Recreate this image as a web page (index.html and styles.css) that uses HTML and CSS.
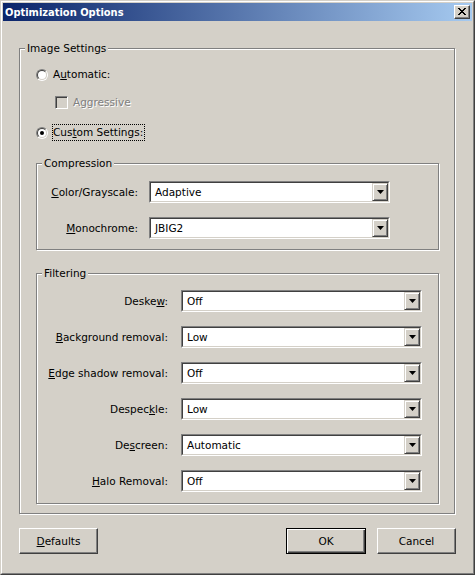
FILE: index.html
```html
<!DOCTYPE html>
<html>
<head>
<meta charset="utf-8">
<title>Optimization Options</title>
<link rel="stylesheet" href="styles.css">
</head>
<body>
<div class="window">
  <div class="frame">
    <div class="titlebar">
      <span class="title">Optimization Options</span>
      <span class="close" aria-label="Close">
        <svg width="8" height="7" viewBox="0 0 8 7" shape-rendering="crispEdges"><path fill="#000" d="M0 0h2v1H0zM6 0h2v1H6zM1 1h2v1H1zM5 1h2v1H5zM2 2h4v1H2zM3 3h2v1H3zM2 4h4v1H2zM1 5h2v1H1zM5 5h2v1H5zM0 6h2v1H0zM6 6h2v1H6z"/></svg>
      </span>
    </div>
    <div class="client">
      <fieldset class="group outer">
        <legend>Image Settings</legend>
        <div class="opt row-auto">
          <span class="radio"></span>
          <span class="opt-label">A<u>u</u>tomatic:</span>
        </div>
        <div class="opt row-aggr">
          <span class="check disabled"></span>
          <span class="opt-label disabled-text">Aggressive</span>
        </div>
        <div class="opt row-custom">
          <span class="radio checked"></span>
          <span class="opt-label focus">Cus<u>t</u>om Settings:</span>
        </div>

        <fieldset class="group inner comp">
          <legend>Compression</legend>
          <div class="form comp-form">
            <span class="lbl"><u>C</u>olor/Grayscale:</span>
            <div class="combo"><div class="combo-in"><span class="val">Adaptive</span><span class="drop"><svg width="7" height="4" viewBox="0 0 7 4"><path d="M0 0h7L3.5 4z" fill="#000"/></svg></span></div></div>
            <span class="lbl"><u>M</u>onochrome:</span>
            <div class="combo"><div class="combo-in"><span class="val">JBIG2</span><span class="drop"><svg width="7" height="4" viewBox="0 0 7 4"><path d="M0 0h7L3.5 4z" fill="#000"/></svg></span></div></div>
          </div>
        </fieldset>

        <fieldset class="group inner filt">
          <legend>Filtering</legend>
          <div class="form filt-form">
            <span class="lbl">Deske<u>w</u>:</span>
            <div class="combo"><div class="combo-in"><span class="val">Off</span><span class="drop"><svg width="7" height="4" viewBox="0 0 7 4"><path d="M0 0h7L3.5 4z" fill="#000"/></svg></span></div></div>
            <span class="lbl"><u>B</u>ackground removal:</span>
            <div class="combo"><div class="combo-in"><span class="val">Low</span><span class="drop"><svg width="7" height="4" viewBox="0 0 7 4"><path d="M0 0h7L3.5 4z" fill="#000"/></svg></span></div></div>
            <span class="lbl"><u>E</u>dge shadow removal:</span>
            <div class="combo"><div class="combo-in"><span class="val">Off</span><span class="drop"><svg width="7" height="4" viewBox="0 0 7 4"><path d="M0 0h7L3.5 4z" fill="#000"/></svg></span></div></div>
            <span class="lbl">Despec<u>k</u>le:</span>
            <div class="combo"><div class="combo-in"><span class="val">Low</span><span class="drop"><svg width="7" height="4" viewBox="0 0 7 4"><path d="M0 0h7L3.5 4z" fill="#000"/></svg></span></div></div>
            <span class="lbl">De<u>s</u>creen:</span>
            <div class="combo"><div class="combo-in"><span class="val">Automatic</span><span class="drop"><svg width="7" height="4" viewBox="0 0 7 4"><path d="M0 0h7L3.5 4z" fill="#000"/></svg></span></div></div>
            <span class="lbl"><u>H</u>alo Removal:</span>
            <div class="combo"><div class="combo-in"><span class="val">Off</span><span class="drop"><svg width="7" height="4" viewBox="0 0 7 4"><path d="M0 0h7L3.5 4z" fill="#000"/></svg></span></div></div>
          </div>
        </fieldset>
      </fieldset>

      <div class="buttons">
        <button class="btn"><u>D</u>efaults</button>
        <div class="btn-group">
          <button class="btn default">OK</button>
          <button class="btn">Cancel</button>
        </div>
      </div>
    </div>
  </div>
</div>
</body>
</html>
```

FILE: styles.css
```css
html, body {
  margin: 0;
  padding: 0;
  background: #d4d0c8;
}
body {
  font-family: "DejaVu Sans", sans-serif;
  font-size: 10.5px;
  line-height: 13px;
  color: #000;
}
u { text-decoration: underline; text-underline-offset: 1px; }

.window {
  width: 475px;
  height: 575px;
  box-sizing: border-box;
  border: 1px solid;
  border-color: #d4d0c8 #404040 #404040 #d4d0c8;
}
.frame {
  height: 100%;
  box-sizing: border-box;
  border: 1px solid;
  border-color: #fff #808080 #808080 #fff;
  padding: 1px;
  display: flex;
  flex-direction: column;
}
.titlebar {
  height: 18px;
  flex: none;
  background: linear-gradient(to right, #0a246a, #a6caf0);
  display: flex;
  align-items: center;
  justify-content: space-between;
  padding: 0 2px;
}
.title {
  color: #fff;
  font-family: "DejaVu Sans Condensed", "DejaVu Sans", sans-serif;
  font-size: 11px;
  font-weight: bold;
}
.close {
  width: 16px;
  height: 14px;
  box-sizing: border-box;
  background: #d4d0c8;
  border: 1px solid;
  border-color: #fff #404040 #404040 #fff;
  box-shadow: inset -1px -1px 0 #808080;
  display: flex;
  align-items: flex-start;
  justify-content: flex-start;
  padding: 2px 0 0 3px;
}
.close svg { display: block; }

.client {
  padding: 21px 0 0 16px;
}

.group {
  margin: 0;
  min-inline-size: 0;
  box-sizing: border-box;
  border: 1px solid #808080;
  box-shadow: 1px 1px 0 #fff, inset 1px 1px 0 #fff;
}
.group > legend {
  margin-left: 5px;
  padding: 0 2px;
  background: #d4d0c8;
  line-height: 13px;
}
.outer {
  width: 436px;
  padding: 0 0 9px 16px;
}
.outer > legend {
  margin-left: -11px;
}
.opt {
  display: flex;
  align-items: center;
  height: 17px;
}
.row-auto { margin-top: 11px; }
.row-aggr { margin-top: 11px; padding-left: 19px; }
.row-custom { margin-top: 13px; }
.row-auto .radio, .row-custom .radio { margin-right: 4px; }
.opt-label {
  border: 1px dotted transparent;
  padding: 1px 1px 1px 0;
}
.opt-label.focus { border-color: #000; }
.row-aggr .opt-label { margin-left: 4px; }

.radio {
  width: 12px;
  height: 12px;
  box-sizing: border-box;
  border-radius: 50%;
  border: 1px solid;
  border-color: #808080 #fff #fff #808080;
  display: flex;
  flex: none;
}
.radio::before {
  content: "";
  flex: 1;
  border-radius: 50%;
  border: 1px solid;
  border-color: #404040 #d4d0c8 #d4d0c8 #404040;
  background: #fff;
}
.radio.checked { position: relative; }
.radio.checked::after {
  content: "";
  position: absolute;
  left: 3px;
  top: 3px;
  width: 4px;
  height: 4px;
  border-radius: 50%;
  background: #000;
}
.check {
  width: 13px;
  height: 13px;
  box-sizing: border-box;
  border: 1px solid;
  border-color: #808080 #fff #fff #808080;
  box-shadow: inset 1px 1px 0 #404040, inset -1px -1px 0 #d4d0c8;
  background: #d4d0c8;
  flex: none;
}
.disabled-text {
  color: #808080;
  text-shadow: 1px 1px 0 #fff;
}

.inner {
  width: 403px;
  padding: 0;
}
.comp { margin-top: 16px; }
.filt { margin-top: 17px; }

.form {
  display: grid;
  align-items: center;
  row-gap: 14px;
  column-gap: 11px;
}
.comp-form {
  grid-template-columns: 101px 241px;
  padding: 11px 0 10px 0;
}
.filt-form {
  grid-template-columns: 131px 241px;
  column-gap: 13px;
  padding: 10px 0 11px 0;
}
.lbl {
  text-align: right;
  white-space: nowrap;
}
.combo {
  width: 241px;
  height: 22px;
  box-sizing: border-box;
  border: 1px solid;
  border-color: #808080 #fff #fff #808080;
}
.combo-in {
  height: 100%;
  box-sizing: border-box;
  border: 1px solid;
  border-color: #404040 #d4d0c8 #d4d0c8 #404040;
  background: #fff;
  display: flex;
  align-items: center;
}
.val {
  flex: 1;
  padding-left: 4px;
}
.drop {
  width: 16px;
  height: 18px;
  box-sizing: border-box;
  background: #d4d0c8;
  border: 1px solid;
  border-color: #d4d0c8 #404040 #404040 #d4d0c8;
  box-shadow: inset 1px 1px 0 #fff, inset -1px -1px 0 #808080;
  display: flex;
  align-items: center;
  justify-content: center;
}
.drop svg { display: block; }

.buttons {
  width: 437px;
  margin-top: 14px;
  display: flex;
  justify-content: space-between;
}
.btn-group {
  display: flex;
  gap: 11px;
}
.btn {
  width: 79px;
  height: 26px;
  box-sizing: border-box;
  margin: 0;
  padding: 0;
  font: inherit;
  color: #000;
  background: #d4d0c8;
  border: 1px solid;
  border-color: #fff #404040 #404040 #fff;
  box-shadow: inset -1px -1px 0 #808080;
}
.btn.default {
  width: 80px;
  border: 1px solid #000;
  box-shadow: inset 1px 1px 0 #fff, inset -1px -1px 0 #404040, inset -2px -2px 0 #808080;
}
```
